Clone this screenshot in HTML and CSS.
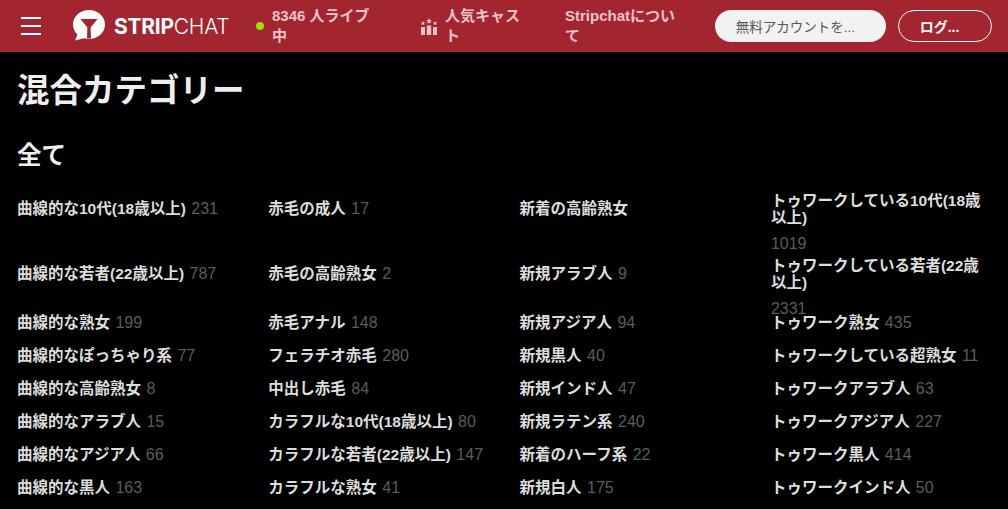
FILE: index.html
```html
<!DOCTYPE html>
<html lang="ja">
<head>
<meta charset="utf-8">
<title>混合カテゴリー</title>
<link rel="stylesheet" href="styles.css">
</head>
<body>
<header class="topbar">
  <button class="burger" aria-label="menu"><span></span><span></span><span></span></button>
  <a class="logo">
    <svg class="logo-mark" viewBox="0 0 32 31" width="32" height="31">
      <path fill="#fff" d="M16 0C7 0 0 6.500 0 14.500C0 18.500 1.700 22 4.500 24.600L2 30.500L11 28.300C12.600 28.800 14.300 29 16 29C25 29 32 22.500 32 14.500C32 6.500 25 0 16 0Z"/>
      <path fill="#a2252f" d="M7.500 9H24.500L17.600 17.500L18 28.500H14L14.400 17.500Z"/>
    </svg>
    <span class="logo-text"><b>STRIP</b>CHAT</span>
  </a>
  <div class="online"><i class="dot"></i><span class="nav-text"><b class="num">8346</b> 人ライブ中</span></div>
  <a class="popular">
    <svg class="pop-icon" viewBox="0 0 18 19" width="18" height="19">
      <g fill="#eec4c8">
        <rect x="1" y="10" width="4" height="8"/><rect x="6.800" y="8.500" width="4.400" height="9.500"/><rect x="13" y="10" width="4" height="8"/>
        <path d="M9 1l.9 1.900 2 .3-1.500 1.400.4 2L9 5.700 7.200 6.600l.4-2L6.100 3.200l2-.3Z"/>
        <path d="M3 4l.7 1.400 1.500.2-1.100 1 .3 1.500L3 7.400 1.600 8.100l.3-1.500-1.100-1 1.500-.2Z"/>
        <path d="M15 4l.7 1.400 1.500.2-1.100 1 .3 1.500L15 7.400l-1.400.7.3-1.500-1.100-1 1.500-.2Z"/>
      </g>
    </svg>
    <span class="nav-text">人気キャスト</span>
  </a>
  <a class="about nav-text">Stripchatについて</a>
  <a class="btn-signup">無料アカウントを...</a>
  <a class="btn-login">ログ...</a>
</header>
<main class="content">
  <h1 class="title">混合カテゴリー</h1>
  <h2 class="subtitle">全て</h2>
  <div class="grid">
    <a class="cat"><span class="name">曲線的な10代(18歳以上)</span> <span class="count">231</span></a>
    <a class="cat"><span class="name">赤毛の成人</span> <span class="count">17</span></a>
    <a class="cat"><span class="name">新着の高齢熟女</span></a>
    <a class="cat wrap"><span class="name">トゥワークしている10代(18歳以上)</span><span class="count">1019</span></a>

    <a class="cat"><span class="name">曲線的な若者(22歳以上)</span> <span class="count">787</span></a>
    <a class="cat"><span class="name">赤毛の高齢熟女</span> <span class="count">2</span></a>
    <a class="cat"><span class="name">新規アラブ人</span> <span class="count">9</span></a>
    <a class="cat wrap"><span class="name">トゥワークしている若者(22歳以上)</span><span class="count">2331</span></a>

    <a class="cat"><span class="name">曲線的な熟女</span> <span class="count">199</span></a>
    <a class="cat"><span class="name">赤毛アナル</span> <span class="count">148</span></a>
    <a class="cat"><span class="name">新規アジア人</span> <span class="count">94</span></a>
    <a class="cat"><span class="name">トゥワーク熟女</span> <span class="count">435</span></a>

    <a class="cat"><span class="name">曲線的なぽっちゃり系</span> <span class="count">77</span></a>
    <a class="cat"><span class="name">フェラチオ赤毛</span> <span class="count">280</span></a>
    <a class="cat"><span class="name">新規黒人</span> <span class="count">40</span></a>
    <a class="cat"><span class="name">トゥワークしている超熟女</span> <span class="count">11</span></a>

    <a class="cat"><span class="name">曲線的な高齢熟女</span> <span class="count">8</span></a>
    <a class="cat"><span class="name">中出し赤毛</span> <span class="count">84</span></a>
    <a class="cat"><span class="name">新規インド人</span> <span class="count">47</span></a>
    <a class="cat"><span class="name">トゥワークアラブ人</span> <span class="count">63</span></a>

    <a class="cat"><span class="name">曲線的なアラブ人</span> <span class="count">15</span></a>
    <a class="cat"><span class="name">カラフルな10代(18歳以上)</span> <span class="count">80</span></a>
    <a class="cat"><span class="name">新規ラテン系</span> <span class="count">240</span></a>
    <a class="cat"><span class="name">トゥワークアジア人</span> <span class="count">227</span></a>

    <a class="cat"><span class="name">曲線的なアジア人</span> <span class="count">66</span></a>
    <a class="cat"><span class="name">カラフルな若者(22歳以上)</span> <span class="count">147</span></a>
    <a class="cat"><span class="name">新着のハーフ系</span> <span class="count">22</span></a>
    <a class="cat"><span class="name">トゥワーク黒人</span> <span class="count">414</span></a>

    <a class="cat"><span class="name">曲線的な黒人</span> <span class="count">163</span></a>
    <a class="cat"><span class="name">カラフルな熟女</span> <span class="count">41</span></a>
    <a class="cat"><span class="name">新規白人</span> <span class="count">175</span></a>
    <a class="cat"><span class="name">トゥワークインド人</span> <span class="count">50</span></a>
  </div>
</main>
</body>
</html>
```
FILE: styles.css
```css
* { box-sizing: border-box; }
html, body { margin: 0; height: 100%; overflow: hidden; }
body {
  background: #000;
  color: #fff;
  font-family: "Liberation Sans", "Noto Sans CJK JP", sans-serif;
}
.topbar {
  display: flex;
  align-items: center;
  height: 52px;
  background: #a2252f;
  padding-left: 21px;
}
.burger {
  display: flex;
  flex-direction: column;
  gap: 6px;
  width: 20px;
  padding: 0;
  border: 0;
  background: none;
  margin-right: 32px;
}
.burger span { display: block; height: 2px; background: #fff; }
.logo { display: flex; align-items: center; width: 155px; flex: none; }
.logo-mark { margin-top: -2px; margin-right: 9px; flex: none; }
.logo-text { font-family: "Inter", "Liberation Sans", sans-serif; font-size: 21px; font-weight: 300; letter-spacing: -.25px; }
.logo-text b { font-weight: 700; }
.online { display: flex; align-items: center; margin-left: 28px; width: 164px; flex: none; }
.dot { width: 8px; height: 8px; border-radius: 50%; background: #a2e000; margin-right: 8px; flex: none; }
.nav-text {
  font-size: 15px;
  line-height: 20px;
  font-weight: 700;
  color: #eec4c8;
}
.online .nav-text { width: 105px; }
.num { color: #eec4c8; }
.popular { display: flex; align-items: center; width: 145px; flex: none; }
.popular .nav-text { width: 76px; }
.pop-icon { margin-right: 7px; flex: none; }
.about { width: 150px; flex: none; padding-right: 32px; }
.btn-signup {
  display: flex;
  align-items: center;
  justify-content: center;
  width: 171px;
  flex: none;
  height: 32px;
  padding-right: 10px;
  border-radius: 16px;
  background: #f2f2f2;
  color: #555;
  font-size: 13.5px;
  margin-right: 12px;
}
.btn-login {
  display: flex;
  align-items: center;
  justify-content: center;
  width: 94px;
  flex: none;
  height: 32px;
  padding-right: 11px;
  border-radius: 16px;
  border: 1px solid #fff;
  color: #fff;
  font-size: 14px;
  font-weight: 700;
}
.content { padding: 0 0 0 17px; }
.title { margin: 18px 0 0; font-size: 32.5px; line-height: 42px; font-weight: 700; color: #eee; }
.subtitle { margin: 28px 0 0; font-size: 24.5px; line-height: 32px; font-weight: 700; color: #eee; }
.grid {
  display: grid;
  grid-template-columns: repeat(4, 251.3px);
  grid-template-rows: 65px 49px repeat(6, 33px);
  margin-top: 20px;
}
.cat { font-size: 16px; line-height: 33px; white-space: nowrap; }
.name { font-size: 15.5px; font-weight: 700; color: #ddd; }
.count { color: #5c5c5c; margin-left: 1px; }
.wrap { white-space: normal; }
.wrap .name { display: block; line-height: 17px; width: 220px; }
.wrap .count { display: block; margin: 1px 0 0; }
```
